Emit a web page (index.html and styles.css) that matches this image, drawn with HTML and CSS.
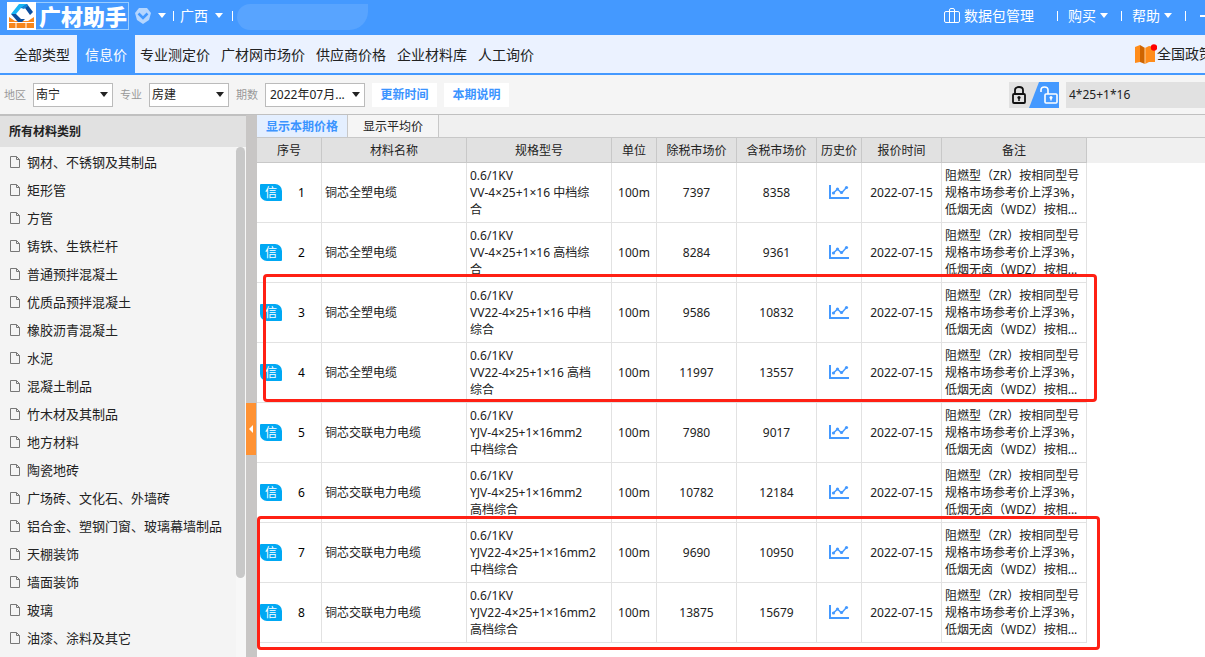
FILE: index.html
```html
<!DOCTYPE html>
<html lang="zh-CN">
<head>
<meta charset="utf-8">
<title>广材助手</title>
<link rel="stylesheet" href="styles.css">
</head>
<body>
<svg class="defs" aria-hidden="true">
  <symbol id="doc" viewBox="0 0 10 12"><path d="M.5.5H6.5L9.5 3.5V11.500H.5ZM6.500.5V3.500H9.500" fill="none" stroke="#777"/></symbol>
  <symbol id="chart" viewBox="0 0 20 15"><path d="M1 0V13H20" fill="none" stroke="#49f" stroke-width="2"/><path d="M4 8.500L8.500 4L12.500 8L17.500 2.500" fill="none" stroke="#49f" stroke-width="1.500"/><g fill="#49f"><circle cx="4.500" cy="8" r="1.600"/><circle cx="8.500" cy="4" r="1.600"/><circle cx="12.500" cy="7.500" r="1.600"/><circle cx="17.500" cy="2.500" r="1.600"/></g></symbol>
  <symbol id="caret" viewBox="0 0 8 5"><path d="M0 0H8L4 5Z" fill="currentColor"/></symbol>
</svg>
<div class="app">
<header class="top">
  <div class="logo">
    <svg width="29" height="28" viewBox="0 0 29 28"><path d="M0 0H29V28H0Z" fill="#fff"/><path d="M2 15L8 19H21L27 15V26H2Z" fill="#f7861b"/><path d="M2 20.500H27M9 21V26M19 21V26M14 17V20" stroke="#fff"/><path d="M12 3H20L26 11L20 19H11L4 12Z" fill="#fff"/><path d="M4 12L12 2H20L17 6H14L9 12Z" fill="#18b4f4"/><path d="M4 12H9L14 17H18L15 20H11Z" fill="#0d4f9e"/><path d="M14 6L20 2L26 10L23 13L18 6Z" fill="#0d4f9e"/><path d="M14 6L20 2L21 4L17 7Z" fill="#1583d8"/></svg>
    <span class="brand">广材助手</span>
  </div>
  <button class="link badge-btn" aria-label="会员"><svg width="16" height="16" viewBox="0 0 16 16"><path d="M4 0H12L16 5L14 12L8 16L2 12L0 5Z" fill="#b5d6ff"/><path d="M3.500 5.500L8 10L12.500 5.500" fill="none" stroke="#49f" stroke-width="2.500"/></svg><svg class="caret"><use href="#caret"/></svg></button>
  <i class="sep"></i>
  <button class="link region">广西<svg class="caret"><use href="#caret"/></svg></button>
  <i class="sep"></i>
  <span class="user"></span>
  <div class="top-right">
    <button class="link"><svg width="16" height="15" viewBox="0 0 16 15" fill="none" stroke="#fff"><rect x=".5" y="3.500" width="15" height="11" rx="1.500"/><path d="M5.500 14V2Q5.500.5 7 .5H9Q10.500.5 10.500 2V14"/></svg>数据包管理</button>
    <i class="sep wide"></i>
    <button class="link">购买<svg class="caret"><use href="#caret"/></svg></button>
    <i class="sep"></i>
    <button class="link">帮助<svg class="caret"><use href="#caret"/></svg></button>
    <i class="sep"></i>
    <button class="min" aria-label="最小化"></button>
  </div>
</header>
<nav class="nav">
  <a href="#" class="all">全部类型</a><a href="#" class="on">信息价</a><a href="#">专业测定价</a><a href="#">广材网市场价</a><a href="#">供应商价格</a><a href="#">企业材料库</a><a href="#">人工询价</a>
  <a href="#" class="policy"><svg width="23" height="21" viewBox="0 0 23 21"><path d="M1 3L6 1V18L1 19Z" fill="#ff8c1a"/><path d="M6 1L11 4V20L6 18Z" fill="#cf6500"/><path d="M11 4L15 2L21 3V18L15 18L11 20Z" fill="#ff8c1a"/><path d="M11 4V20" stroke="#ffd09a"/><circle cx="20" cy="3.500" r="3.200" fill="#f00"/></svg><span>全国政策</span></a>
</nav>
<div class="filters">
  <label for="area">地区</label><span class="pick"><select id="area"><option>南宁</option></select><svg class="caret"><use href="#caret"/></svg></span>
  <label for="major">专业</label><span class="pick"><select id="major"><option>房建</option></select><svg class="caret"><use href="#caret"/></svg></span>
  <label for="term">期数</label><span class="pick long"><select id="term"><option>2022年07月...</option></select><svg class="caret"><use href="#caret"/></svg></span>
  <button class="action">更新时间</button><button class="action">本期说明</button>
  <button class="lock" aria-label="锁定"><svg width="50" height="26" viewBox="0 0 50 26"><path d="M0 0H50V26H0Z" fill="#e1e1e1"/><path d="M30 0H50V26H20Z" fill="#49f"/><rect x="4" y="12" width="12" height="9" rx="1" fill="none" stroke="#111" stroke-width="1.800"/><path d="M6 12V8Q6 5 10 5Q14 5 14 8V12" fill="none" stroke="#111" stroke-width="1.800"/><circle cx="10" cy="15.500" r="1.600" fill="#111"/><path d="M10 15V19" stroke="#111" stroke-width="1.500"/><rect x="36" y="12" width="12" height="9" rx="1" fill="none" stroke="#fff" stroke-width="1.600"/><path d="M32 10V8Q32 5 35.500 5Q39 5 39 8V12" fill="none" stroke="#fff" stroke-width="1.600"/><circle cx="42" cy="15.500" r="1.500" fill="#fff"/><path d="M42 15V18.500" stroke="#fff" stroke-width="1.400"/></svg></button>
  <input class="search" type="text" aria-label="搜索" value="4*25+1*16">
</div>
<main class="main">
<aside class="side">
  <h2>所有材料类别</h2>
  <div class="side-body">
    <ul>
      <li><svg><use href="#doc"/></svg>钢材、不锈钢及其制品</li>
      <li><svg><use href="#doc"/></svg>矩形管</li>
      <li><svg><use href="#doc"/></svg>方管</li>
      <li><svg><use href="#doc"/></svg>铸铁、生铁栏杆</li>
      <li><svg><use href="#doc"/></svg>普通预拌混凝土</li>
      <li><svg><use href="#doc"/></svg>优质品预拌混凝土</li>
      <li><svg><use href="#doc"/></svg>橡胶沥青混凝土</li>
      <li><svg><use href="#doc"/></svg>水泥</li>
      <li><svg><use href="#doc"/></svg>混凝土制品</li>
      <li><svg><use href="#doc"/></svg>竹木材及其制品</li>
      <li><svg><use href="#doc"/></svg>地方材料</li>
      <li><svg><use href="#doc"/></svg>陶瓷地砖</li>
      <li><svg><use href="#doc"/></svg>广场砖、文化石、外墙砖</li>
      <li><svg><use href="#doc"/></svg>铝合金、塑钢门窗、玻璃幕墙制品</li>
      <li><svg><use href="#doc"/></svg>天棚装饰</li>
      <li><svg><use href="#doc"/></svg>墙面装饰</li>
      <li><svg><use href="#doc"/></svg>玻璃</li>
      <li><svg><use href="#doc"/></svg>油漆、涂料及其它</li>
    </ul>
    <div class="track"><div class="thumb"></div></div>
  </div>
</aside>
<div class="gutter"><button class="fold" aria-label="收起"><svg width="4" height="8" viewBox="0 0 4 8"><path d="M4 0V8L0 4Z" fill="#fff"/></svg></button></div>
<section class="content">
  <div class="tabs"><button class="on">显示本期价格</button><button>显示平均价</button></div>
  <div class="sheet">
  <table>
    <colgroup><col class="c65"><col class="c145"><col class="c145"><col class="c45"><col class="c80"><col class="c80"><col class="c45"><col class="c80"><col class="c145"></colgroup>
    <thead><tr><th>序号</th><th>材料名称</th><th>规格型号</th><th>单位</th><th>除税市场价</th><th>含税市场价</th><th>历史价</th><th>报价时间</th><th>备注</th></tr></thead>
    <tbody>
      <tr><td><div class="no"><b>信</b><span>1</span></div></td><td class="l">铜芯全塑电缆</td><td class="l">0.6/1KV<br>VV-4×25+1×16 中档综<br>合</td><td>100m</td><td>7397</td><td>8358</td><td><button class="hist" aria-label="历史价"><svg><use href="#chart"/></svg></button></td><td>2022-07-15</td><td class="l">阻燃型（ZR）按相同型号<br>规格市场参考价上浮3%，<br>低烟无卤（WDZ）按相...</td></tr>
      <tr><td><div class="no"><b>信</b><span>2</span></div></td><td class="l">铜芯全塑电缆</td><td class="l">0.6/1KV<br>VV-4×25+1×16 高档综<br>合</td><td>100m</td><td>8284</td><td>9361</td><td><button class="hist" aria-label="历史价"><svg><use href="#chart"/></svg></button></td><td>2022-07-15</td><td class="l">阻燃型（ZR）按相同型号<br>规格市场参考价上浮3%，<br>低烟无卤（WDZ）按相...</td></tr>
      <tr><td><div class="no"><b>信</b><span>3</span></div></td><td class="l">铜芯全塑电缆</td><td class="l">0.6/1KV<br>VV22-4×25+1×16 中档<br>综合</td><td>100m</td><td>9586</td><td>10832</td><td><button class="hist" aria-label="历史价"><svg><use href="#chart"/></svg></button></td><td>2022-07-15</td><td class="l">阻燃型（ZR）按相同型号<br>规格市场参考价上浮3%，<br>低烟无卤（WDZ）按相...</td></tr>
      <tr><td><div class="no"><b>信</b><span>4</span></div></td><td class="l">铜芯全塑电缆</td><td class="l">0.6/1KV<br>VV22-4×25+1×16 高档<br>综合</td><td>100m</td><td>11997</td><td>13557</td><td><button class="hist" aria-label="历史价"><svg><use href="#chart"/></svg></button></td><td>2022-07-15</td><td class="l">阻燃型（ZR）按相同型号<br>规格市场参考价上浮3%，<br>低烟无卤（WDZ）按相...</td></tr>
      <tr><td><div class="no"><b>信</b><span>5</span></div></td><td class="l">铜芯交联电力电缆</td><td class="l">0.6/1KV<br>YJV-4×25+1×16mm2<br>中档综合</td><td>100m</td><td>7980</td><td>9017</td><td><button class="hist" aria-label="历史价"><svg><use href="#chart"/></svg></button></td><td>2022-07-15</td><td class="l">阻燃型（ZR）按相同型号<br>规格市场参考价上浮3%，<br>低烟无卤（WDZ）按相...</td></tr>
      <tr><td><div class="no"><b>信</b><span>6</span></div></td><td class="l">铜芯交联电力电缆</td><td class="l">0.6/1KV<br>YJV-4×25+1×16mm2<br>高档综合</td><td>100m</td><td>10782</td><td>12184</td><td><button class="hist" aria-label="历史价"><svg><use href="#chart"/></svg></button></td><td>2022-07-15</td><td class="l">阻燃型（ZR）按相同型号<br>规格市场参考价上浮3%，<br>低烟无卤（WDZ）按相...</td></tr>
      <tr><td><div class="no"><b>信</b><span>7</span></div></td><td class="l">铜芯交联电力电缆</td><td class="l">0.6/1KV<br>YJV22-4×25+1×16mm2<br>中档综合</td><td>100m</td><td>9690</td><td>10950</td><td><button class="hist" aria-label="历史价"><svg><use href="#chart"/></svg></button></td><td>2022-07-15</td><td class="l">阻燃型（ZR）按相同型号<br>规格市场参考价上浮3%，<br>低烟无卤（WDZ）按相...</td></tr>
      <tr><td><div class="no"><b>信</b><span>8</span></div></td><td class="l">铜芯交联电力电缆</td><td class="l">0.6/1KV<br>YJV22-4×25+1×16mm2<br>高档综合</td><td>100m</td><td>13875</td><td>15679</td><td><button class="hist" aria-label="历史价"><svg><use href="#chart"/></svg></button></td><td>2022-07-15</td><td class="l">阻燃型（ZR）按相同型号<br>规格市场参考价上浮3%，<br>低烟无卤（WDZ）按相...</td></tr>
    </tbody>
  </table>
  <div class="mark mark-a"></div>
  <div class="mark mark-b"></div>
  </div>
</section>
</main>
</div>
</body>
</html>
```
FILE: styles.css
```css
* { box-sizing: border-box; }
body { margin: 0; font: 12px/17px "Noto Sans", "Noto Sans CJK SC", sans-serif; color: #222; background: #fff; }
button, input, select { font: inherit; color: inherit; border: 0; padding: 0; margin: 0; background: none; border-radius: 0; }
a { color: inherit; text-decoration: none; }
svg { display: block; flex: none; }
.defs { position: absolute; width: 0; height: 0; }
.app { height: 100vh; display: flex; flex-direction: column; overflow: hidden; }
.caret { width: 8px; height: 5px; }

/* title bar */
.top { flex: none; height: 35px; padding-left: 7px; display: flex; align-items: center; background: #49f; color: #fff; font-size: 14px; line-height: 20px; padding-bottom: 4px; }
.logo { display: flex; align-items: center; height: 28px; width: 122px; border: 1px solid #9cf; border-left: 0; }
.brand { font-size: 22px; line-height: 26px; font-weight: 900; white-space: nowrap; padding-left: 3px; }
.link { display: flex; align-items: center; gap: 4px; white-space: nowrap; }
.badge-btn { gap: 7px; padding: 0 7px 0 6px; }
.sep { width: 1px; height: 10px; background: #fff; flex: none; }
.region { gap: 7px; padding: 0 9px 0 6px; }
.user { width: 131px; height: 26px; margin: 3px 0 0 4px; background: #58a4ff; border-radius: 14px 0 20px 14px; }
.top-right { margin-left: auto; display: flex; align-items: center; gap: 10px; }
.top-right .sep { margin-left: 3px; }
.top-right .wide { margin-left: 13px; }
.min { width: 9px; height: 20px; display: flex; align-items: center; justify-content: flex-end; }
.min::after { content: ""; width: 5px; height: 2px; background: #fff; }

/* category navigation */
.nav { flex: none; display: flex; height: 40px; background: #ebf2ff; border-bottom: 2px solid #49f; font-size: 14px; line-height: 40px; padding-left: 7px; white-space: nowrap; }
.nav a { padding: 0 6px 0 5px; }
.nav .all { padding: 0 7px; }
.nav .on { padding: 0 8px; background: #49f; color: #fff; }
.nav .policy { margin-left: auto; padding: 0; width: 71px; display: flex; align-items: center; overflow: hidden; }

/* filters */
.filters { flex: none; display: flex; align-items: center; gap: 7px; height: 40px; padding-left: 4px; background: #f5f5f5; border-bottom: 1px solid #c0c0c0; }
.filters label { font-size: 11px; color: #999; }
.pick { display: flex; align-items: center; width: 80px; height: 24px; border: 1px solid #bbb; background: #fff; padding-right: 4px; }
.pick select { appearance: none; flex: 1; min-width: 0; width: 100%; height: 22px; padding-left: 2px; outline: 0; }
.pick.long { width: 100px; }
.pick.long select { padding-left: 4px; }
.action { width: 65px; height: 24px; background: #fff; color: #3b94ff; font-weight: bold; }
.lock { margin-left: auto; }
.search { width: 139px; height: 26px; padding: 0 3px; background: #e1e1e1; outline: 0; }

/* sidebar */
.main { flex: 1; min-height: 0; display: flex; }
.side { width: 246px; flex: none; display: flex; flex-direction: column; background: #f4f4f4; }
.side h2 { margin: 0; height: 32px; flex: none; padding-left: 9px; font-size: 12px; line-height: 32px; background: #e1e1e1; border-top: 1px solid #c0c0c0; }
.side-body { flex: 1; min-height: 0; display: flex; overflow: hidden; }
.side ul { flex: 1; margin: 0; padding: 1px 0 0 10px; list-style: none; font-size: 13px; line-height: 28px; white-space: nowrap; }
.side li { display: flex; align-items: center; gap: 7px; height: 28px; }
.side li svg { width: 10px; height: 12px; }
.track { width: 10px; padding-right: 1px; flex: none; background: #f7f7f7; }
.thumb { height: 431px; border-radius: 5px; background: #c8c8c8; }
.gutter { width: 11px; flex: none; background: #c8c6c5; padding-right: 1px; display: flex; flex-direction: column; }
.fold { margin-top: 288px; height: 52px; background: #ff9233; display: flex; align-items: center; padding-left: 3px; }

/* price table */
.content { flex: 1; min-width: 0; }
.tabs { display: flex; height: 23px; background: #f0f0f0; border-bottom: 1px solid #c8c8c8; }
.tabs button { width: 91px; border-right: 1px solid #c8c8c8; background: #f5f5f5; }
.tabs .on { background: #e4efff; color: #3b94ff; font-weight: bold; }
.sheet { position: relative; background: linear-gradient(#f0f0f0 25px, #fff 25px); }
table { width: 830px; table-layout: fixed; border-collapse: separate; border-spacing: 0; }
.c45 { width: 45px; } .c65 { width: 65px; } .c80 { width: 80px; } .c145 { width: 145px; }
th, td { padding: 0; text-align: center; vertical-align: middle; white-space: nowrap; }
th { height: 25px; font-weight: normal; background: #e1e1e1; border: solid #c8c8c8; border-width: 0 1px 1px 0; }
td { height: 60px; border: solid #e2e2e2; border-width: 0 1px 1px 0; }
td.l { text-align: left; padding-left: 3px; overflow: hidden; }
.no { display: flex; align-items: center; padding-left: 3px; color: #000; }
.no b { width: 22px; height: 17px; background: #00a8f3; color: #fff; font-weight: normal; border-radius: 1px 7px 1px 7px; }
.no span { flex: 1; }
.hist { display: flex; margin: 0 auto; }
.hist svg { width: 20px; height: 15px; }
.mark { position: absolute; border: 3px solid #ff2014; border-radius: 4px; pointer-events: none; }
.mark-a { left: 6px; top: 136px; width: 834px; height: 128px; }
.mark-b { left: 0; top: 378px; width: 843px; height: 134px; }
```
